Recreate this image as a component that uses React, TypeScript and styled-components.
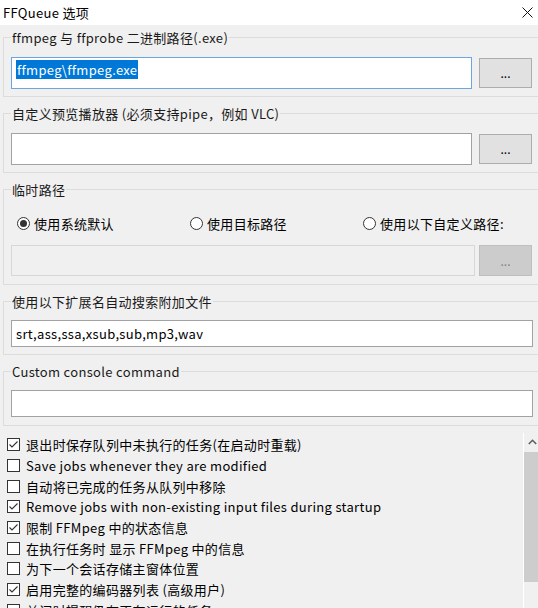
import styled, { createGlobalStyle } from 'styled-components';

const GlobalStyle = createGlobalStyle`
  html, body {
    margin: 0;
    padding: 0;
    background: #f0f0f0;
  }
  body {
    font-family: "Noto Sans CJK SC", "Noto Sans", sans-serif;
    font-size: 13px;
    letter-spacing: 0.32px;
    color: #000;
    overflow: hidden;
  }
`;

const Window = styled.div`
  display: flex;
  flex-direction: column;
  width: 538px;
  height: 608px;
  overflow: hidden;
  background: #f0f0f0;
`;

const TitleBar = styled.div`
  display: flex;
  align-items: center;
  justify-content: space-between;
  flex: none;
  height: 25px;
  padding: 0 5px 0 3px;
  background: #fff;
`;

const Title = styled.span`
  font-size: 13px;
  line-height: 25px;
`;

const Body = styled.div`
  display: flex;
  flex-direction: column;
  gap: 8px;
  padding-top: 3.5px;
  flex: 1;
  min-height: 0;
`;

const Group = styled.fieldset<{ $padTop?: number; $padBottom?: number }>`
  margin: 0 -6px 0 3px;
  padding: ${(p) => p.$padTop ?? 11}px 10px ${(p) => p.$padBottom ?? 7}px 7px;
  border: 1px solid #dcdcdc;
  min-width: 0;
`;

const Legend = styled.legend`
  padding: 0 1px;
  line-height: 17px;
  font-size: 13px;
  color: #1a1a1a;
`;

const Row = styled.div<{ $gap?: number }>`
  display: flex;
  gap: ${(p) => p.$gap ?? 7}px;
`;

const TextBox = styled.div<{ $h: number; $focused?: boolean; $disabled?: boolean; $top?: boolean }>`
  display: flex;
  align-items: ${(p) => (p.$top ? 'flex-start' : 'center')};
  flex: 1;
  box-sizing: border-box;
  height: ${(p) => p.$h}px;
  padding: ${(p) => (p.$top ? '2px 4px' : '0 4px')};
  border: 1px solid
    ${(p) => (p.$focused ? '#6aa7e2' : p.$disabled ? '#d7d7d7' : '#a2a2a2')};
  background: ${(p) => (p.$disabled ? '#f0f0f0' : '#fff')};
  font-size: 13px;
  white-space: nowrap;
`;

const Selected = styled.span`
  padding: 0 1px;
  line-height: 19px;
  background: #0078d7;
  color: #fff;
`;

const BrowseButton = styled.button<{ $h: number }>`
  flex: none;
  width: 53px;
  height: ${(p) => p.$h}px;
  margin-top: 1px;
  margin-right: 1px;
  padding: 0;
  border: 1px solid #adadad;
  background: #e1e1e1;
  color: #000;
  font: inherit;
  font-size: 12px;

  &:disabled {
    border-color: #bfbfbf;
    background: #cccccc;
    color: #838383;
    margin-top: 0;
  }
`;

const RadioRow = styled.div`
  display: grid;
  grid-template-columns: 173px 173px 1fr;
  align-items: center;
  height: 20px;
  padding-left: 6px;
  margin-bottom: 12px;
`;

const RadioLabel = styled.label`
  display: flex;
  align-items: center;
  gap: 4px;
  white-space: nowrap;
`;

const RadioCircle = styled.span<{ $checked?: boolean }>`
  display: flex;
  align-items: center;
  justify-content: center;
  box-sizing: border-box;
  width: 13px;
  height: 13px;
  border: 1px solid #333;
  border-radius: 50%;
  background: #fff;

  &::after {
    content: '';
    display: ${(p) => (p.$checked ? 'block' : 'none')};
    width: 7px;
    height: 7px;
    border-radius: 50%;
    background: #333;
  }
`;

const ListPanel = styled.div`
  display: flex;
  flex: 1;
  min-height: 0;
  margin: -1px -3px 0 0;
`;

const CheckList = styled.div`
  flex: 1;
  padding: 1.5px 0 0 7px;
`;

const CheckRow = styled.label`
  display: flex;
  align-items: center;
  gap: 6px;
  height: 20.7px;
  white-space: nowrap;
`;

const Box = styled.span`
  display: flex;
  align-items: center;
  justify-content: center;
  flex: none;
  box-sizing: border-box;
  width: 13px;
  height: 13px;
  border: 1px solid #333;
  background: #fff;
`;

const Scrollbar = styled.div`
  display: flex;
  flex-direction: column;
  flex: none;
  width: 17px;
  border-left: 1px solid #fff;
  background: #f0f0f0;
`;

const ScrollArrow = styled.div`
  display: flex;
  align-items: center;
  justify-content: center;
  height: 18px;
`;

const Thumb = styled.div`
  height: 130px;
  margin-top: 1px;
  background: #cdcdcd;
`;

const CheckBox = ({ checked }: { checked?: boolean }) => (
  <Box>
    {checked && (
      <svg width="11" height="11" viewBox="0 0 11 11">
        <polyline points="1.5,5.5 4,8 9.5,2.5" fill="none" stroke="#333" strokeWidth="1.1" />
      </svg>
    )}
  </Box>
);

const options = [
  { text: '退出时保存队列中未执行的任务(在启动时重载)', checked: true },
  { text: 'Save jobs whenever they are modified', checked: false },
  { text: '自动将已完成的任务从队列中移除', checked: false },
  { text: 'Remove jobs with non-existing input files during startup', checked: true },
  { text: '限制 FFMpeg 中的状态信息', checked: true },
  { text: '在执行任务时 显示 FFMpeg 中的信息', checked: false },
  { text: '为下一个会话存储主窗体位置', checked: false },
  { text: '启用完整的编码器列表 (高级用户)', checked: true },
  { text: '关闭时提醒仍有正在运行的任务', checked: false },
];

const App = () => {
  return (
    <Window>
      <GlobalStyle />
      <TitleBar>
        <Title>FFQueue 选项</Title>
        <svg width="11" height="11" viewBox="0 0 11 11">
          <path d="M0.5 0.5 L10.5 10.5 M10.5 0.5 L0.5 10.5" stroke="#111" strokeWidth="1" />
        </svg>
      </TitleBar>

      <Body>
        <Group>
          <Legend>ffmpeg 与 ffprobe 二进制路径(.exe)</Legend>
          <Row>
            <TextBox $h={32} $focused $top>
              <Selected>ffmpeg\ffmpeg.exe</Selected>
            </TextBox>
            <BrowseButton $h={30}>...</BrowseButton>
          </Row>
        </Group>

        <Group>
          <Legend>自定义预览播放器 (必须支持pipe，例如 VLC)</Legend>
          <Row>
            <TextBox $h={32} />
            <BrowseButton $h={30}>...</BrowseButton>
          </Row>
        </Group>

        <Group $padTop={15.5} $padBottom={8}>
          <Legend>临时路径</Legend>
          <RadioRow>
            <RadioLabel>
              <RadioCircle $checked />
              使用系统默认
            </RadioLabel>
            <RadioLabel>
              <RadioCircle />
              使用目标路径
            </RadioLabel>
            <RadioLabel>
              <RadioCircle />
              使用以下自定义路径:
            </RadioLabel>
          </RadioRow>
          <Row $gap={4}>
            <TextBox $h={31} $disabled />
            <BrowseButton $h={31} disabled>
              ...
            </BrowseButton>
          </Row>
        </Group>

        <Group $padTop={10}>
          <Legend>使用以下扩展名自动搜索附加文件</Legend>
          <TextBox $h={27}>srt,ass,ssa,xsub,sub,mp3,wav</TextBox>
        </Group>

        <Group $padTop={10} $padBottom={8}>
          <Legend>Custom console command</Legend>
          <TextBox $h={27} />
        </Group>

        <ListPanel>
          <CheckList>
            {options.map((o) => (
              <CheckRow key={o.text}>
                <CheckBox checked={o.checked} />
                {o.text}
              </CheckRow>
            ))}
          </CheckList>
          <Scrollbar>
            <ScrollArrow>
              <svg width="9" height="6" viewBox="0 0 9 6">
                <polyline points="0.8,5 4.5,1.3 8.2,5" fill="none" stroke="#606060" strokeWidth="1.6" />
              </svg>
            </ScrollArrow>
            <Thumb />
          </Scrollbar>
        </ListPanel>
      </Body>
    </Window>
  );
};

export default App;
